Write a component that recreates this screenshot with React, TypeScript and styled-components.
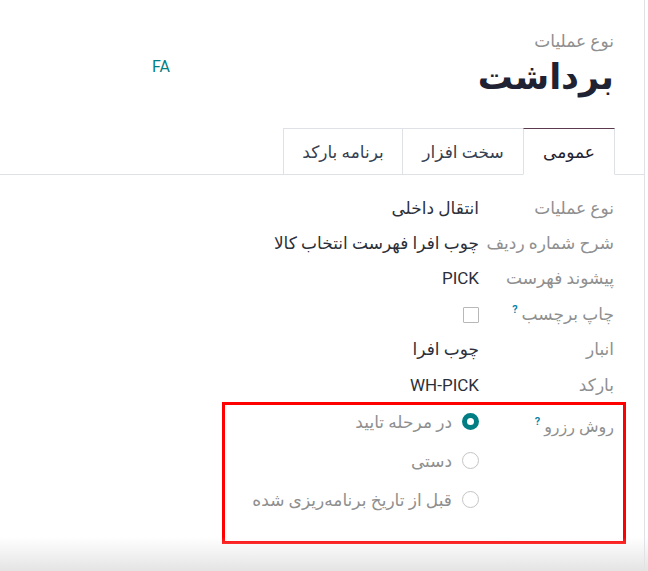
import styled, { createGlobalStyle } from "styled-components";

const Global = createGlobalStyle`
  html, body {
    margin: 0;
    padding: 0;
    background: #fff;
  }
  body {
    font-family: Roboto, "DejaVu Sans", sans-serif;
    color: #212529;
  }
`;

const Page = styled.div`
  width: 648px;
  height: 571px;
  position: relative;
  overflow: hidden;
  background: #fff;
`;

const Sheet = styled.div`
  width: 645px;
  height: 571px;
  box-sizing: border-box;
  border-right: 1px solid #dee2e6;
  direction: rtl;
  padding-top: 29px;
`;

const Header = styled.div`
  display: flex;
  align-items: flex-start;
  justify-content: space-between;
  padding: 0 30px 0 0;
  height: 99px;
`;

const TitleBlock = styled.div`
  display: flex;
  flex-direction: column;
`;

const SubTitle = styled.div`
  font-size: 17px;
  color: #8f8f8f;
  line-height: 24px;
`;

const Title = styled.h1`
  margin: 0;
  font-size: 35px;
  font-weight: 700;
  color: #1f2233;
  line-height: 50px;
`;

const Code = styled.div`
  margin-left: 152px;
  margin-top: 28px;
  font-size: 16px;
  color: #017e84;
  direction: ltr;
`;

const Tabs = styled.div`
  display: flex;
  border-bottom: 1px solid #dee2e6;
  padding-right: 29px;
  height: 46px;
`;

const Tab = styled.div<{ $active?: boolean; $w: number }>`
  box-sizing: border-box;
  height: 47px;
  display: flex;
  align-items: center;
  justify-content: center;
  font-size: 17px;
  color: ${(p) => (p.$active ? "#1f2233" : "#374151")};
  border: 1px solid #dee2e6;
  border-right-width: ${(p) => (p.$active ? "1px" : "0")};
  border-top-color: ${(p) => (p.$active ? "#5b3a4f" : "#dee2e6")};
  border-bottom-color: ${(p) => (p.$active ? "#fff" : "#dee2e6")};
  background: #fff;
  width: ${(p) => p.$w}px;
`;

const Fields = styled.div`
  padding: 15px 30px 0 0;
  display: flex;
  flex-direction: column;
`;

const Row = styled.div`
  display: flex;
  align-items: center;
  height: 35.4px;
  font-size: 17px;
`;

const Label = styled.div`
  width: 135px;
  color: #8f8f8f;
  flex-shrink: 0;
`;

const Help = styled.sup`
  color: #0180a5;
  font-size: 11px;
  font-weight: 600;
  margin-right: 4px;
  vertical-align: 7px;
`;

const Value = styled.div`
  color: #2b2f3a;
`;

const Checkbox = styled.div`
  box-sizing: border-box;
  width: 16px;
  height: 16px;
  border: 1px solid #b8b8b8;
  border-radius: 1px;
  margin-top: 2px;
`;

const RadioBlock = styled.div`
  position: relative;
  display: flex;
  padding-bottom: 25px;
`;

const RadioLabel = styled(Label)`
  line-height: 39px;
`;

const RadioList = styled.div`
  display: flex;
  flex-direction: column;
`;

const RadioRow = styled.label`
  display: flex;
  align-items: center;
  gap: 10px;
  height: 39px;
  font-size: 17px;
  color: #8f8f8f;
`;

const Radio = styled.span<{ $on?: boolean }>`
  box-sizing: border-box;
  width: 17px;
  height: 17px;
  border-radius: 50%;
  border: ${(p) => (p.$on ? "5px solid #017e84" : "1px solid #c4c4c4")};
  background: #fff;
`;

const Highlight = styled.div`
  position: absolute;
  top: 0;
  bottom: 0;
  right: -12px;
  width: 404px;
  box-sizing: border-box;
  border: 3px solid #f00;
  pointer-events: none;
`;

const BottomShade = styled.div`
  position: absolute;
  left: 0;
  right: 0;
  bottom: 0;
  height: 34px;
  background: linear-gradient(to bottom, rgba(232, 232, 232, 0), rgba(228, 228, 228, 1));
`;

export default function App() {
  return (
    <Page>
      <Global />
      <Sheet>
        <Header>
          <TitleBlock>
            <SubTitle>نوع عملیات</SubTitle>
            <Title>برداشت</Title>
          </TitleBlock>
          <Code>FA</Code>
        </Header>
        <Tabs>
          <Tab $active $w={92}>عمومی</Tab>
          <Tab $w={121}>سخت افزار</Tab>
          <Tab $w={119}>برنامه بارکد</Tab>
        </Tabs>
        <Fields>
          <Row>
            <Label>نوع عملیات</Label>
            <Value>انتقال داخلی</Value>
          </Row>
          <Row>
            <Label>شرح شماره ردیف</Label>
            <Value>چوب افرا فهرست انتخاب کالا</Value>
          </Row>
          <Row>
            <Label>پیشوند فهرست</Label>
            <Value>PICK</Value>
          </Row>
          <Row>
            <Label>
              چاپ برچسب<Help>?</Help>
            </Label>
            <Checkbox />
          </Row>
          <Row>
            <Label>انبار</Label>
            <Value>چوب افرا</Value>
          </Row>
          <Row>
            <Label>بارکد</Label>
            <Value>WH-PICK</Value>
          </Row>
          <RadioBlock>
            <RadioLabel>
              روش رزرو<Help>?</Help>
            </RadioLabel>
            <RadioList>
              <RadioRow>
                <Radio $on />
                در مرحله تایید
              </RadioRow>
              <RadioRow>
                <Radio />
                دستی
              </RadioRow>
              <RadioRow>
                <Radio />
                قبل از تاریخ برنامه‌ریزی شده
              </RadioRow>
            </RadioList>
            <Highlight />
          </RadioBlock>
        </Fields>
      </Sheet>
      <BottomShade />
    </Page>
  );
}
